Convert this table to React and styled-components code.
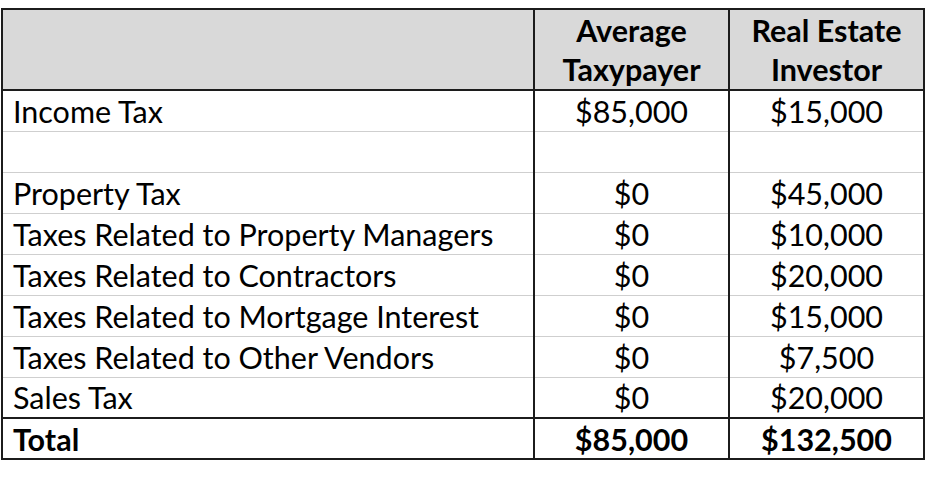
import React from 'react';
import styled, { createGlobalStyle } from 'styled-components';

const GlobalStyle = createGlobalStyle`
  html, body {
    margin: 0;
    padding: 0;
    background: #fff;
  }
  body {
    font-family: Lato, "Open Sans", sans-serif;
    color: #000;
  }
`;

const Page = styled.div`
  width: 926px;
  height: 481px;
  padding: 8px 0 0 1px;
  box-sizing: border-box;
`;

const Table = styled.table`
  border-collapse: collapse;
  table-layout: fixed;
  width: 922px;
  border: 2px solid #1c1c1c;
  font-size: 30.5px;
`;

const HeadCell = styled.th`
  background: #d9d9d9;
  font-weight: 700;
  line-height: 39px;
  height: 78px;
  padding: 1px 0 0;
  text-align: center;
  vertical-align: middle;
  border-left: ${(p) => (p.$first ? 'none' : '2px solid #1c1c1c')};
  border-bottom: 2px solid #1c1c1c;
`;

const Row = styled.tr`
  height: 41px;
  font-weight: ${(p) => (p.$total ? 700 : 400)};
  border-top: ${(p) => (p.$total ? '2px solid #1c1c1c' : '1px solid #cfcfcf')};
`;

const LabelCell = styled.td`
  padding: 1px 0 0 10px;
  text-align: left;
  white-space: nowrap;
  line-height: 37px;
`;

const ValueCell = styled.td`
  padding: 1px 0 0;
  line-height: 37px;
  text-align: center;
  border-left: 2px solid #1c1c1c;
`;

const rows = [
  ['Income Tax', '$85,000', '$15,000'],
  ['', '', ''],
  ['Property Tax', '$0', '$45,000'],
  ['Taxes Related to Property Managers', '$0', '$10,000'],
  ['Taxes Related to Contractors', '$0', '$20,000'],
  ['Taxes Related to Mortgage Interest', '$0', '$15,000'],
  ['Taxes Related to Other Vendors', '$0', '$7,500'],
  ['Sales Tax', '$0', '$20,000'],
];

export default function App() {
  return (
    <Page>
      <GlobalStyle />
      <Table>
        <colgroup>
          <col style={{ width: 532 }} />
          <col style={{ width: 195 }} />
          <col style={{ width: 195 }} />
        </colgroup>
        <thead>
          <tr>
            <HeadCell $first />
            <HeadCell>Average<br />Taxypayer</HeadCell>
            <HeadCell>Real Estate<br />Investor</HeadCell>
          </tr>
        </thead>
        <tbody>
          {rows.map(([label, avg, inv], i) => (
            <Row key={i}>
              <LabelCell>{label}</LabelCell>
              <ValueCell>{avg}</ValueCell>
              <ValueCell>{inv}</ValueCell>
            </Row>
          ))}
          <Row $total>
            <LabelCell>Total</LabelCell>
            <ValueCell>$85,000</ValueCell>
            <ValueCell>$132,500</ValueCell>
          </Row>
        </tbody>
      </Table>
    </Page>
  );
}
